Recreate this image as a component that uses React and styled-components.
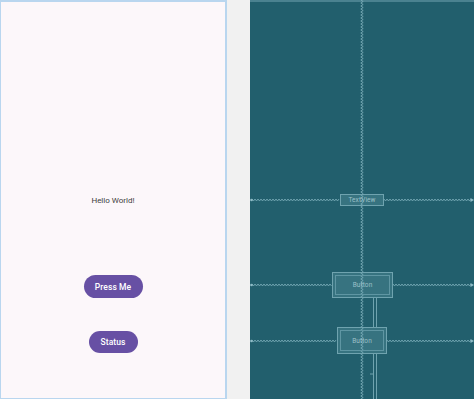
import React from "react";
import styled, { createGlobalStyle } from "styled-components";

const Global = createGlobalStyle`
  html, body { margin: 0; padding: 0; background: #f1f1f1; }
  body { font-family: Roboto, "Noto Sans", sans-serif; }
`;

const Stage = styled.div`
  display: flex;
  width: 474px;
  height: 399px;
  overflow: hidden;
  background: #f1f1f1;
`;

const DesignPanel = styled.div`
  box-sizing: border-box;
  width: 227px;
  height: 399px;
  border: 2px solid #b9d6ef;
  border-left-width: 1px;
  border-bottom-width: 1px;
  background: #fcf7fa;
  display: flex;
  flex-direction: column;
  align-items: center;
  padding-top: 193px;
`;

const HelloText = styled.div`
  font-family: Roboto, "Noto Sans", sans-serif;
  font-size: 8px;
  line-height: 12px;
  color: #3d3d3d;
`;

const PillButton = styled.div`
  box-sizing: border-box;
  display: flex;
  align-items: center;
  justify-content: center;
  width: ${(p) => p.$w}px;
  height: ${(p) => p.$h}px;
  margin-top: ${(p) => p.$mt}px;
  border-radius: 12px;
  background: #6750a4;
  color: #ffffff;
  font-family: Roboto, "Noto Sans", sans-serif;
  font-weight: 500;
  font-size: 8.5px;
  letter-spacing: 0.1px;
`;

const Gutter = styled.div`
  width: 23px;
  height: 399px;
  background: #f1f1f1;
`;

const Blueprint = styled.div`
  position: relative;
  width: 224px;
  height: 399px;
  background: #225f6d;
  border-top: 2px solid #4b8290;
  box-sizing: border-box;
`;

const Lines = styled.svg`
  position: absolute;
  left: 0;
  top: -2px;
  width: 224px;
  height: 399px;
`;

const WidgetBox = styled.div`
  position: absolute;
  box-sizing: border-box;
  left: ${(p) => p.$x}px;
  top: ${(p) => p.$y - 2}px;
  width: ${(p) => p.$w}px;
  height: ${(p) => p.$h}px;
  border: 1px solid #6fa3af;
  background: rgba(120, 175, 188, 0.25);
  display: flex;
  align-items: center;
  justify-content: center;
  padding: ${(p) => (p.$double ? "2px" : "0")};
`;

const InnerFrame = styled.div`
  box-sizing: border-box;
  width: 100%;
  height: 100%;
  border: 1px solid #5f96a3;
  display: flex;
  align-items: center;
  justify-content: center;
`;

const WidgetLabel = styled.span`
  font-family: Roboto, "Noto Sans", sans-serif;
  font-size: 6.5px;
  color: #9cc0c8;
  letter-spacing: 0.1px;
`;

function zigH(x1, x2, y) {
  const pts = [];
  let up = true;
  for (let x = x1; x <= x2; x += 1.5) {
    pts.push(`${x},${y + (up ? -1 : 1)}`);
    up = !up;
  }
  return pts.join(" ");
}

function zigV(x, y1, y2) {
  const pts = [];
  let left = true;
  for (let y = y1; y <= y2; y += 1.5) {
    pts.push(`${x + (left ? -1.2 : 1.2)},${y}`);
    left = !left;
  }
  return pts.join(" ");
}

const rows = [
  { y: 200, l: 90, r: 134 },
  { y: 285, l: 82, r: 143 },
  { y: 341, l: 87, r: 137 },
];

export default function App() {
  return (
    <>
      <Global />
      <Stage>
        <DesignPanel>
          <HelloText>Hello World!</HelloText>
          <PillButton $w={59} $h={23} $mt={68}>Press Me</PillButton>
          <PillButton $w={49} $h={22} $mt={33}>Status</PillButton>
        </DesignPanel>
        <Gutter />
        <Blueprint>
          <Lines viewBox="0 0 224 399">
            <polyline points={zigV(112, 0, 399)} fill="none" stroke="#7fb1bd" strokeWidth="0.8" />
            {rows.map((r) => (
              <g key={r.y}>
                <polyline points={zigH(2, r.l, r.y)} fill="none" stroke="#7fb1bd" strokeWidth="0.8" />
                <polyline points={zigH(r.r, 222, r.y)} fill="none" stroke="#7fb1bd" strokeWidth="0.8" />
                <circle cx="1.5" cy={r.y} r="1.3" fill="#8fbcc7" />
                <polygon points={`224,${r.y} 220.5,${r.y - 2} 220.5,${r.y + 2}`} fill="#8fbcc7" />
              </g>
            ))}
            <line x1="123.5" y1="298" x2="123.5" y2="327" stroke="#6fa3af" strokeWidth="1" />
            <line x1="126.5" y1="298" x2="126.5" y2="327" stroke="#6fa3af" strokeWidth="1" />
            <line x1="123.5" y1="354" x2="123.5" y2="399" stroke="#6fa3af" strokeWidth="1" />
            <line x1="126.5" y1="354" x2="126.5" y2="399" stroke="#6fa3af" strokeWidth="1" />
            <polyline points="120,374 123.5,374 123.5,382" fill="none" stroke="#6fa3af" strokeWidth="1" />
          </Lines>
          <WidgetBox $x={90} $y={194} $w={44} $h={12}>
            <WidgetLabel>TextView</WidgetLabel>
          </WidgetBox>
          <WidgetBox $x={82} $y={272} $w={61} $h={26} $double>
            <InnerFrame>
              <WidgetLabel>Button</WidgetLabel>
            </InnerFrame>
          </WidgetBox>
          <WidgetBox $x={87} $y={327} $w={50} $h={27} $double>
            <InnerFrame>
              <WidgetLabel>Button</WidgetLabel>
            </InnerFrame>
          </WidgetBox>
        </Blueprint>
      </Stage>
    </>
  );
}
